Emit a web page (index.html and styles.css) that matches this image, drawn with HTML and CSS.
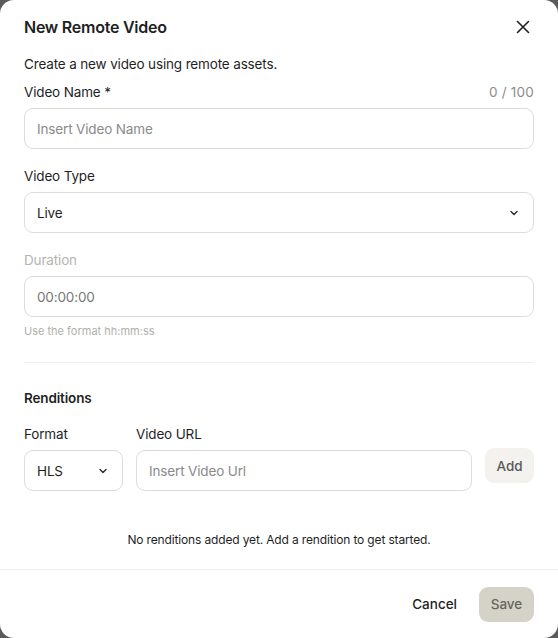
FILE: index.html
```html
<!DOCTYPE html>
<html lang="en">
<head>
<meta charset="utf-8">
<title>New Remote Video</title>
<link rel="stylesheet" href="styles.css">
</head>
<body>
<div class="dialog">
  <div class="content">
    <div class="header">
      <h1 class="title">New Remote Video</h1>
      <button class="close" aria-label="Close">
        <svg width="14" height="14" viewBox="0 0 14 14"><path d="M1.5 1.5 L12.5 12.5 M12.5 1.5 L1.5 12.5" stroke="#1f1f1f" stroke-width="1.6" stroke-linecap="round" fill="none"/></svg>
      </button>
    </div>
    <p class="desc">Create a new video using remote assets.</p>

    <div class="field">
      <div class="label-row">
        <label class="label">Video Name *</label>
        <span class="counter">0 / 100</span>
      </div>
      <div class="input placeholder">Insert Video Name</div>
    </div>

    <div class="field">
      <label class="label">Video Type</label>
      <div class="input select">
        <span>Live</span>
        <svg class="chev" width="10" height="6" viewBox="0 0 10 6"><path d="M2 1.5 L5 4.5 L8 1.5" stroke="#333" stroke-width="1.5" fill="none" stroke-linecap="round" stroke-linejoin="round"/></svg>
      </div>
    </div>

    <div class="field">
      <label class="label disabled">Duration</label>
      <div class="input value-muted">00:00:00</div>
      <div class="hint">Use the format hh:mm:ss</div>
    </div>

    <hr class="divider">

    <h2 class="section">Renditions</h2>

    <div class="rend-row">
      <div class="col-format">
        <label class="label">Format</label>
        <div class="input select">
          <span>HLS</span>
          <svg class="chev" width="10" height="6" viewBox="0 0 10 6"><path d="M2 1.5 L5 4.5 L8 1.5" stroke="#333" stroke-width="1.5" fill="none" stroke-linecap="round" stroke-linejoin="round"/></svg>
        </div>
      </div>
      <div class="col-url">
        <label class="label">Video URL</label>
        <div class="input placeholder">Insert Video Url</div>
      </div>
      <button class="add">Add</button>
    </div>

    <p class="empty">No renditions added yet. Add a rendition to get started.</p>
  </div>
  <div class="footer">
    <button class="cancel">Cancel</button>
    <button class="save">Save</button>
  </div>
</div>
</body>
</html>
```
FILE: styles.css
```css
html, body {
  margin: 0;
  padding: 0;
  height: 100%;
}
body {
  background: #5b5b5b;
  font-family: Inter, "Liberation Sans", sans-serif;
  color: #1f1f1f;
}
.dialog {
  background: #ffffff;
  width: 558px;
  height: 638px;
  border-radius: 14px;
  box-sizing: border-box;
  display: flex;
  flex-direction: column;
}
.content {
  padding: 17px 24px 0 24px;
  flex: 1;
}
.header {
  display: flex;
  justify-content: space-between;
  align-items: center;
  height: 20px;
}
.title {
  margin: 0;
  font-size: 16px;
  font-weight: 600;
  letter-spacing: -0.25px;
}
.close {
  border: 0;
  background: none;
  padding: 0;
  width: 14px;
  height: 14px;
  margin-right: 4px;
  display: flex;
}
.desc {
  margin: 17px 0 0 0;
  font-size: 13.5px;
  line-height: 20px;
  letter-spacing: -0.15px;
}
.field {
  margin-top: 8px;
}
.field + .field {
  margin-top: 17px;
}
.label-row {
  display: flex;
  justify-content: space-between;
  align-items: center;
}
.label {
  display: block;
  font-size: 13.5px;
  line-height: 20px;
  letter-spacing: -0.15px;
  margin-bottom: 6px;
}
.counter {
  font-size: 13.5px;
  color: #8c8c8c;
  margin-bottom: 6px;
  letter-spacing: 0.2px;
}
.label.disabled { color: #b5b5b0; }
.input {
  height: 41px;
  box-sizing: border-box;
  border: 1px solid #dcdcd8;
  border-radius: 9px;
  padding: 0 12px;
  display: flex;
  align-items: center;
  font-size: 13.5px;
  letter-spacing: -0.15px;
}
.placeholder { color: #8a8a8a; }
.value-muted { color: #777; }
.select {
  justify-content: space-between;
  color: #1f1f1f;
}
.chev { margin-right: 2px; }
.hint {
  font-size: 11px;
  color: #b0b0ab;
  margin-top: 7px;
  line-height: 14px;
}
.divider {
  border: 0;
  border-top: 1px solid #f0f0ee;
  margin: 24px 0 0 0;
}
.section {
  margin: 25px 0 0 0;
  font-size: 13.5px;
  font-weight: 600;
  line-height: 20px;
  letter-spacing: -0.15px;
}
.rend-row {
  display: flex;
  align-items: flex-start;
  gap: 13px;
  margin-top: 16px;
}
.col-format { width: 99px; }
.col-url { flex: 1; }
.add {
  margin-top: 24px;
  width: 49px;
  height: 35px;
  border: 0;
  border-radius: 9px;
  background: #f3f2ee;
  color: #5a5a5a;
  font-family: inherit;
  font-size: 13.5px;
  font-weight: 500;
  padding: 0;
}
.empty {
  margin: 40px 0 0 0;
  text-align: center;
  font-size: 12px;
  line-height: 18px;
  letter-spacing: -0.15px;
}
.footer {
  border-top: 1px solid #efefed;
  height: 69px;
  box-sizing: border-box;
  display: flex;
  justify-content: flex-end;
  align-items: center;
  gap: 22px;
  padding: 0 24px 0 0;
}
.cancel {
  border: 0;
  background: none;
  font-family: inherit;
  font-size: 13.5px;
  font-weight: 500;
  color: #1f1f1f;
  padding: 0;
}
.save {
  width: 55px;
  height: 35px;
  border: 0;
  border-radius: 9px;
  background: #d5d3c7;
  color: #66665f;
  font-family: inherit;
  font-size: 13.5px;
  font-weight: 500;
  padding: 0;
}
```
